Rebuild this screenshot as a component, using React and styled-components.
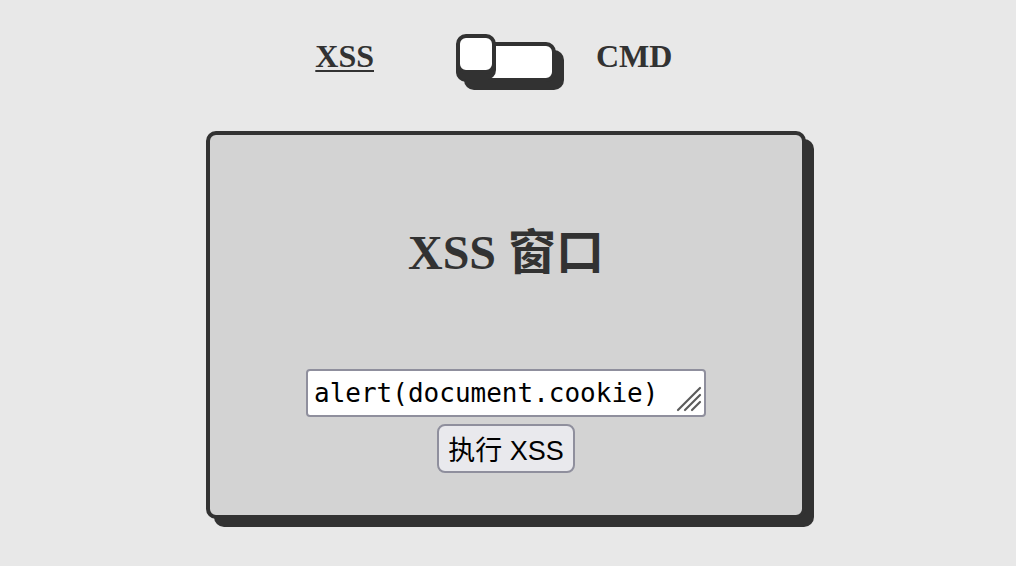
import React, { useState } from 'react'
import styled, { createGlobalStyle } from 'styled-components'

const GlobalStyle = createGlobalStyle`
    html, body {
        margin: 0;
        padding: 0;
        background: #e8e8e8;
    }
    body {
        font-family: "Liberation Serif", "Noto Sans CJK SC", serif;
        color: #323232;
    }
`

const Page = styled.div`
    width: 1012px;
    padding: 0 4px 40px 0;
    display: flex;
    flex-direction: column;
    align-items: center;
`

const SwitchRow = styled.div`
    display: grid;
    grid-template-columns: 1fr 100px 1fr;
    width: 100%;
    padding-top: 34px;
    align-items: start;
`

const Label = styled.span`
    font-size: 32px;
    font-weight: bold;
    line-height: 37px;
    margin-top: 4px;
    color: #323232;
    text-decoration: ${props => (props.active ? 'underline' : 'none')};
    text-decoration-thickness: 2px;
    text-underline-offset: 3px;
    justify-self: ${props => (props.side === 'left' ? 'end' : 'start')};
    margin-right: ${props => (props.side === 'left' ? '82px' : '0')};
    margin-left: ${props => (props.side === 'right' ? '40px' : '0')};
    cursor: pointer;
`

const Track = styled.button`
    position: relative;
    box-sizing: border-box;
    width: 100px;
    height: 40px;
    margin-top: 8px;
    padding: 0;
    border: 4px solid #323232;
    border-radius: 10px;
    background: #fff;
    box-shadow: 8px 8px 0 #323232;
    cursor: pointer;
`

const Knob = styled.span`
    position: absolute;
    box-sizing: border-box;
    width: 40px;
    height: 40px;
    top: -12px;
    left: ${props => (props.on ? '56px' : '-4px')};
    border: 4px solid #323232;
    border-radius: 10px;
    background: #fff;
    box-shadow: 0 6px 0 #323232;
    transition: left 0.3s;
`

const Card = styled.div`
    box-sizing: border-box;
    width: 600px;
    margin-top: 49px;
    padding: 90px 0 42px;
    border: 4px solid #323232;
    border-radius: 10px;
    background: #d3d3d3;
    box-shadow: 8px 8px 0 #323232;
    display: flex;
    flex-direction: column;
    align-items: center;
`

const Title = styled.h2`
    margin: 0 0 89px;
    font-size: 48px;
    line-height: 55px;
    font-weight: bold;
    color: #323232;
    font-family: "Liberation Serif", "Noto Sans CJK SC", serif;
`

const InputWrap = styled.div`
    position: relative;
    width: 400px;
    height: 48px;
`

const Input = styled.textarea`
    box-sizing: border-box;
    display: block;
    width: 100%;
    height: 100%;
    margin: 0;
    padding: 5px 6px;
    border: 2px solid #8f8f9d;
    border-radius: 4px;
    background: #fff;
    color: #000;
    font-family: "DejaVu Sans Mono", monospace;
    font-size: 26px;
    line-height: 34px;
    resize: none;
    overflow: hidden;
    outline: none;
`

const Grip = styled.svg`
    position: absolute;
    right: 4px;
    bottom: 5px;
    pointer-events: none;
`

const RunButton = styled.button`
    box-sizing: border-box;
    margin-top: 7px;
    height: 49px;
    padding: 0 9px;
    border: 2px solid #8f8f9d;
    border-radius: 8px;
    background: #e9e9ed;
    color: #000;
    font-family: "Liberation Sans", "Noto Sans CJK SC", sans-serif;
    font-size: 27px;
    cursor: pointer;
`

function App() {
    const [cmd, setCmd] = useState(false)
    const [code, setCode] = useState('alert(document.cookie)')

    return (
        <Page>
            <GlobalStyle />
            <SwitchRow>
                <Label side="left" active={!cmd} onClick={() => setCmd(false)}>XSS</Label>
                <Track onClick={() => setCmd(!cmd)} aria-label="switch">
                    <Knob on={cmd} />
                </Track>
                <Label side="right" active={cmd} onClick={() => setCmd(true)}>CMD</Label>
            </SwitchRow>
            <Card>
                <Title>{cmd ? 'CMD 窗口' : 'XSS 窗口'}</Title>
                <InputWrap>
                    <Input value={code} onChange={e => setCode(e.target.value)} spellCheck={false} />
                    <Grip width="26" height="26" viewBox="0 0 26 26">
                        <g stroke="#5a5a5a" strokeWidth="2.2" strokeLinecap="round">
                            <line x1="2" y1="24" x2="24" y2="2" />
                            <line x1="9" y1="24" x2="24" y2="9" />
                            <line x1="16" y1="24" x2="24" y2="16" />
                        </g>
                    </Grip>
                </InputWrap>
                <RunButton>{cmd ? '执行 CMD' : '执行 XSS'}</RunButton>
            </Card>
        </Page>
    )
}

export default App
